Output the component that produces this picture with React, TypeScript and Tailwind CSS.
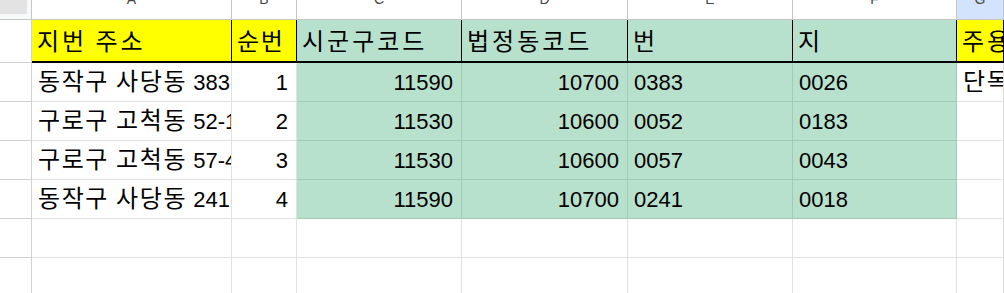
import React from "react";

const widths = [
  "w-[32px]",
  "w-[200px]",
  "w-[65px]",
  "w-[165px]",
  "w-[166px]",
  "w-[165px]",
  "w-[164px]",
  "flex-1",
];

const letters = ["", "A", "B", "C", "D", "E", "F", "G"];

const header = ["지번 주소", "순번", "시군구코드", "법정동코드", "번", "지", "주용도"];

const rows = [
  ["동작구 사당동 383-26", "1", "11590", "10700", "0383", "0026", "단독주택"],
  ["구로구 고척동 52-183", "2", "11530", "10600", "0052", "0183", ""],
  ["구로구 고척동 57-43", "3", "11530", "10600", "0057", "0043", ""],
  ["동작구 사당동 241-18", "4", "11590", "10700", "0241", "0018", ""],
];

// hangul runs get the wider CJK face, digits stay in Liberation Sans
function Ko({ text, wide }: { text: string; wide?: boolean }) {
  const parts = text.split(/([가-힣]+(?: [가-힣]+)*)/);
  return (
    <span>
      {parts.map((p, i) =>
        /[가-힣]/.test(p) ? (
          <span
            key={i}
            className={`font-['Noto_Sans_CJK_KR',sans-serif] text-[24px] ${
              wide ? "tracking-[3px]" : "tracking-[1.6px]"
            }`}
          >
            {p}
          </span>
        ) : (
          <span key={i}>{p}</span>
        )
      )}
    </span>
  );
}

function RowHead() {
  return <div className="w-[32px] shrink-0 border-r border-b border-[#d0d0d0] bg-white" />;
}

export default function App() {
  return (
    <div className="w-[1004px] h-[293px] overflow-hidden bg-white font-['Liberation_Sans',sans-serif] text-[22px] leading-[26px] text-black">
      {/* column letters, mostly scrolled off the top */}
      <div className="flex h-[20px]">
        <div className="w-[32px] shrink-0 border-r border-b border-[#c4c7c5] bg-[#f8f9fa]">
          <div className="w-[27px] h-[14px] bg-[#e3e3e3]" />
        </div>
        {letters.slice(1).map((l, i) => (
          <div
            key={l}
            className={`${widths[i + 1]} shrink-0 overflow-hidden flex justify-center border-r border-b border-[#c4c7c5] ${
              l === "G" ? "bg-[#d3e3fd]" : "bg-white"
            }`}
          >
            <span className="-mt-[8px] text-[14px] leading-[14px] text-[#444746]">{l}</span>
          </div>
        ))}
      </div>

      {/* header row */}
      <div className="flex h-[43px]">
        <RowHead />
        {header.map((h, i) => (
          <div
            key={h}
            className={`${widths[i + 1]} shrink-0 overflow-hidden whitespace-nowrap flex items-end pl-[5px] pr-[8px] pb-[5px] border-r border-r-black border-b-2 border-b-black ${
              i === 0 || i === 1 || i === 6 ? "bg-[#ffff00]" : "bg-[#b7e1cd]"
            }`}
          >
            <Ko text={h} wide={i !== 1} />
          </div>
        ))}
      </div>

      {/* data rows */}
      {rows.map((r, ri) => (
        <div key={ri} className="flex h-[39px]">
          <RowHead />
          {r.map((v, i) => {
            const green = i >= 2 && i <= 5;
            const right = i === 1 || i === 2 || i === 3;
            return (
              <div
                key={i}
                className={`${widths[i + 1]} shrink-0 overflow-hidden whitespace-nowrap flex items-end pl-[6px] pr-[8px] pb-[5px] border-r border-b ${
                  green ? "bg-[#b7e1cd] border-[#a2cbb7]" : "bg-white border-[#e1e1e1]"
                } ${right ? "justify-end" : "justify-start"}`}
              >
                <Ko text={v} />
              </div>
            );
          })}
        </div>
      ))}

      {/* empty rows */}
      {[0, 1, 2].map((e) => (
        <div key={e} className="flex h-[39px]">
          <RowHead />
          {widths.slice(1).map((w, i) => (
            <div key={i} className={`${w} shrink-0 border-r border-b border-[#e1e1e1] bg-white`} />
          ))}
        </div>
      ))}
    </div>
  );
}
